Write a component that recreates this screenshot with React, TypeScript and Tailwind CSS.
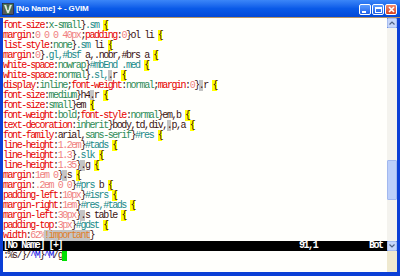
import React from "react";

type Seg = [string, string];

// vim css syntax colours
const P = "text-[#e60000]"; // property
const K = "text-[#2e8b57]"; // keyword value
const N = "text-[#f07f7f]"; // number value
const D = "text-[#3a1212]"; // plain
const T = "text-[#1a8a8a]"; // selector id/class
const G = "bg-[#c4c4c4] text-[#3a1212]"; // matched dot
const Y = "bg-[#ffff00] text-[#3a1212]"; // brace
const I = "bg-[#c4c4c4] text-[#e0802a]"; // !important

const lines: Seg[][] = [
  [["font-size", P], [":", D], ["x-small", K], ["}", D], [".sm", T], [" ", D], ["{", Y]],
  [["margin", P], [":", D], ["0 0 0 40px", N], [";", D], ["padding", P], [":", D], ["0", N], ["}ol li ", D], ["{", Y]],
  [["list-style", P], [":", D], ["none", K], ["}", D], [".sm", T], [" li ", D], ["{", Y]],
  [["margin", P], [":", D], ["0", N], ["}", D], [".gl,#bsf", T], [" a,.nobr,#brs a ", D], ["{", Y]],
  [["white-space", P], [":", D], ["nowrap", K], ["}", D], ["#mbEnd .med", T], [" ", D], ["{", Y]],
  [["white-space", P], [":", D], ["normal", K], ["}", D], [".sl,", T], [".", G], ["r ", D], ["{", Y]],
  [["display", P], [":", D], ["inline", K], [";", D], ["font-weight", P], [":", D], ["normal", K], [";", D], ["margin", P], [":", D], ["0", N], ["}", D], [".", G], ["r ", D], ["{", Y]],
  [["font-size", P], [":", D], ["medium", K], ["}h4", D], [".", G], ["r ", D], ["{", Y]],
  [["font-size", P], [":", D], ["small", K], ["}em ", D], ["{", Y]],
  [["font-weight", P], [":", D], ["bold", K], [";", D], ["font-style", P], [":", D], ["normal", K], ["}em,b ", D], ["{", Y]],
  [["text-decoration", P], [":", D], ["inherit", K], ["}body,td,div,", D], [".", G], ["p,a ", D], ["{", Y]],
  [["font-family", P], [":", D], ["arial,", D], ["sans-serif", K], ["}", D], ["#res", T], [" ", D], ["{", Y]],
  [["line-height", P], [":", D], ["1.2em", N], ["}", D], ["#tads", T], [" ", D], ["{", Y]],
  [["line-height", P], [":", D], ["1.3", N], ["}", D], [".slk", T], [" ", D], ["{", Y]],
  [["line-height", P], [":", D], ["1.35", N], ["}", D], [".", G], ["g ", D], ["{", Y]],
  [["margin", P], [":", D], ["1em 0", N], ["}", D], [".", G], ["s ", D], ["{", Y]],
  [["margin", P], [":", D], [".2em 0 0", N], ["}", D], ["#prs", T], [" b ", D], ["{", Y]],
  [["padding-left", P], [":", D], ["10px", N], ["}", D], ["#isrs", T], [" ", D], ["{", Y]],
  [["margin-right", P], [":", D], ["1em", N], ["}", D], ["#res,#tads", T], [" ", D], ["{", Y]],
  [["margin-left", P], [":", D], ["30px", N], ["}", D], [".", G], ["s table ", D], ["{", Y]],
  [["padding-top", P], [":", D], ["3px", N], ["}", D], ["#gdst", T], [" ", D], ["{", Y]],
  [["width", P], [":", D], ["62%", N], ["!important", I], ["}", D]],
];

const mono = "font-['Liberation_Mono',monospace] text-[10px] leading-[10px] tracking-[-1.45px] whitespace-pre";

function TitleButton({ kind }: { kind: "min" | "max" | "close" }) {
  const bg =
    kind === "close"
      ? "bg-linear-to-b from-[#f0876a] to-[#d8401c]"
      : "bg-linear-to-b from-[#5c9cff] to-[#1f5fe8]";
  return (
    <div className={`w-[12px] h-[11px] rounded-[2px] border border-white flex items-center justify-center ${bg}`}>
      {kind === "min" && <div className="w-[4px] h-[2px] bg-white mt-[5px] -ml-[2px]" />}
      {kind === "max" && <div className="w-[7px] h-[6px] border border-white border-t-2" />}
      {kind === "close" && (
        <svg width="7" height="7" viewBox="0 0 7 7">
          <path d="M1 1 L6 6 M6 1 L1 6" stroke="white" strokeWidth="1.6" />
        </svg>
      )}
    </div>
  );
}

function ScrollArrow({ up }: { up: boolean }) {
  return (
    <div className="w-[10px] h-[10px] bg-[#c6d6fb] border border-[#a8bef0] rounded-[1px] flex items-center justify-center">
      <svg width="6" height="4" viewBox="0 0 6 4">
        <path d={up ? "M0.5 3.5 L3 1 L5.5 3.5" : "M0.5 0.5 L3 3 L5.5 0.5"} stroke="#4d6185" strokeWidth="1.2" fill="none" />
      </svg>
    </div>
  );
}

export default function App() {
  return (
    <div className="w-[400px] h-[276px] bg-[#0b3fd6] flex flex-col overflow-hidden">
      {/* title bar */}
      <div className="h-[17px] bg-linear-to-b from-[#3b86f8] via-[#0a5ae8] to-[#0348d6] flex items-center pl-[2px] pr-[3px]">
        <svg width="12" height="12" viewBox="0 0 12 12" className="shrink-0">
          <rect x="0.5" y="0.5" width="11" height="11" fill="#5a5a5a" stroke="#222" strokeWidth="0.6" />
          <path d="M1.5 1.5 H4.5 L6 7 L7.5 1.5 H10.5 L7 10.5 H5 Z" fill="#e6e6e6" stroke="#1b7a2a" strokeWidth="0.6" />
        </svg>
        <span className="ml-[2px] text-white font-bold text-[8px] font-['Liberation_Sans',sans-serif] tracking-[-0.1px] leading-none">
          [No Name] + - GVIM
        </span>
        <div className="ml-auto flex gap-[1px] mt-[2px]">
          <TitleButton kind="min" />
          <TitleButton kind="max" />
          <TitleButton kind="close" />
        </div>
      </div>
      <div className="h-px bg-[#b59366]" />

      {/* editor + scrollbar */}
      <div className="h-[254px] flex px-[3px]">
        <div className="w-[384px] bg-[#fffffc] flex flex-col pt-[3px] overflow-hidden">
          {lines.map((segs, i) => (
            <div key={i} className={`h-[10px] ${mono}`}>
              {segs.map(([t, c], j) => (
                <span key={j} className={c}>
                  {t}
                </span>
              ))}
            </div>
          ))}
          <div className={`h-[10px] bg-black text-white font-bold flex ${mono}`}>
            <span className="w-[296px] shrink-0">[No Name] [+]</span>
            <span className="w-[70px] shrink-0">91,1</span>
            <span className="shrink-0">Bot</span>
          </div>
          <div className={`h-[10px] ${mono} text-[#3a1212] flex`}>
            <span>{":%s/}/"}</span>
            <span className="text-[#1414e6]">^M</span>
            <span>{"}"}</span>
            <span className="text-[#1414e6]">^M</span>
            <span>/g</span>
            <span className="inline-block w-[5px] h-[10px] bg-[#00e000]" />
          </div>
        </div>
        <div className="w-[10px] flex flex-col">
          <ScrollArrow up />
          <div className="flex-1 bg-[#f4f3ee] flex flex-col">
            <div className="h-[132px]" />
            <div className="h-[40px] bg-[#bccffa] border border-[#a2b8ee] rounded-[1px]" />
          </div>
          <ScrollArrow up={false} />
          <div className="h-[21px] bg-[#efe9cf]" />
        </div>
      </div>
    </div>
  );
}
